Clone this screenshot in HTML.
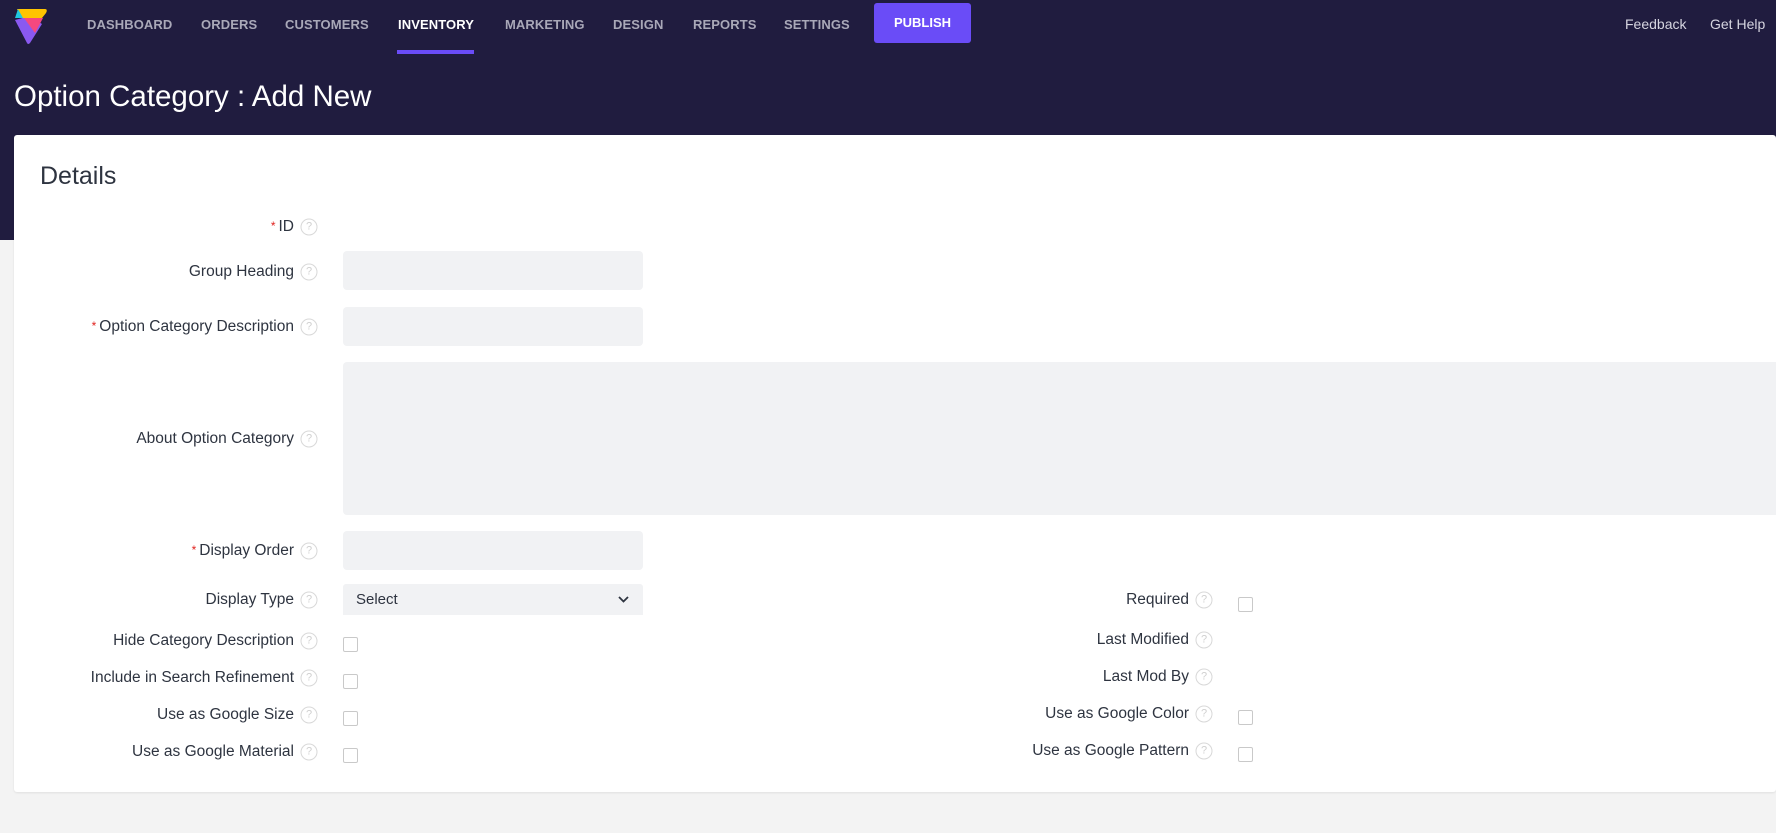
<!DOCTYPE html>
<html><head><meta charset="utf-8"><style>
*{box-sizing:border-box;margin:0;padding:0}
body{width:1776px;height:833px;background:#f3f3f3;font-family:"Liberation Sans",sans-serif;position:relative;overflow:hidden;color:#2e3440}
.hdr{position:absolute;left:0;top:0;width:1776px;height:240px;background:#201c3f}
.nav{position:absolute;top:17px;font-size:13px;font-weight:bold;color:#a9a8b8;letter-spacing:0.1px}
.nav.act{color:#fff}
.ul{position:absolute;left:397px;top:50px;width:77px;height:4px;background:#6a4cf7}
.pub{position:absolute;left:874px;top:3px;width:97px;height:40px;background:#6a4cf7;border-radius:3px;color:#fff;font-weight:bold;font-size:13px;text-align:center;line-height:40px}
.rl{position:absolute;top:16px;font-size:14px;color:#d6d5e0}
.title{position:absolute;left:14px;top:80px;font-size:29.5px;color:#fff}
.card{position:absolute;left:14px;top:135px;width:1762px;height:657px;background:#fff;border-radius:3px;box-shadow:0 1px 2px rgba(0,0,0,.08)}
.det{position:absolute;left:40px;top:162px;font-size:25px;color:#2e3440}
.lbl{position:absolute;font-size:15.5px;color:#2e3440;text-align:right;white-space:nowrap;transform:translateY(-50%)}
.lbl .s{color:#e0221e;font-size:12px;vertical-align:1px;margin-right:3px}
.q{position:absolute;width:17px;height:17px;border:1.3px solid #d8d8d8;border-radius:50%;color:#d0d0d0;font-size:11px;text-align:center;line-height:15px;transform:translate(-50%,-50%)}
.in{position:absolute;left:343px;width:300px;height:39px;background:#f1f2f4;border-radius:4px}
.cb{position:absolute;width:15px;height:15px;border:1.6px solid #c9c9c9;border-radius:2px}
</style></head><body>
<div class="hdr"></div>
<svg style="position:absolute;left:12px;top:6px" width="38" height="40" viewBox="0 0 38 40">
<path d="M3 14 L15 37 Q16 39 18 37 L30 18 L18 10 Z" fill="#8a59f0"/>
<path d="M5 3 L33 3 Q36 3 34 7 L30 12 L9 12 Z" fill="#ffc400"/>
<path d="M3 12 L6 3 L11 12 Z" fill="#1fc8e0"/>
<path d="M12 12 L31 12 L23 27 Z" fill="#f5487f"/>
</svg>
<div class="nav" style="left:87px">DASHBOARD</div>
<div class="nav" style="left:201px">ORDERS</div>
<div class="nav" style="left:285px">CUSTOMERS</div>
<div class="nav act" style="left:398px">INVENTORY</div>
<div class="nav" style="left:505px">MARKETING</div>
<div class="nav" style="left:613px">DESIGN</div>
<div class="nav" style="left:693px">REPORTS</div>
<div class="nav" style="left:784px">SETTINGS</div>
<div class="ul"></div>
<div class="pub">PUBLISH</div>
<div class="rl" style="left:1625px">Feedback</div>
<div class="rl" style="left:1710px">Get Help</div>
<div class="title">Option Category : Add New</div>
<div class="card"></div>
<div class="det">Details</div>

<div class="lbl" style="right:1482px;top:227px"><span class="s">*</span>ID</div><div class="q" style="left:309px;top:227px">?</div>
<div class="lbl" style="right:1482px;top:272px">Group Heading</div><div class="q" style="left:309px;top:272px">?</div>
<div class="in" style="top:251px"></div>
<div class="lbl" style="right:1482px;top:327px"><span class="s">*</span>Option Category Description</div><div class="q" style="left:309px;top:327px">?</div>
<div class="in" style="top:307px"></div>
<div class="lbl" style="right:1482px;top:439px">About Option Category</div><div class="q" style="left:309px;top:439px">?</div>
<div class="in" style="top:362px;width:1433px;height:153px;border-radius:4px 0 0 4px"></div>
<div class="lbl" style="right:1482px;top:551px"><span class="s">*</span>Display Order</div><div class="q" style="left:309px;top:551px">?</div>
<div class="in" style="top:531px"></div>
<div class="lbl" style="right:1482px;top:600px">Display Type</div><div class="q" style="left:309px;top:600px">?</div>
<div class="in" style="top:584px;height:31px;border-radius:3px 3px 0 0;font-size:15px;line-height:31px;padding-left:13px">Select<svg style="position:absolute;right:14px;top:12px" width="11" height="7" viewBox="0 0 11 7"><path d="M1 1 L5.5 5.5 L10 1" stroke="#2e3440" stroke-width="1.8" fill="none"/></svg></div>
<div class="lbl" style="right:1482px;top:641px">Hide Category Description</div><div class="q" style="left:309px;top:641px">?</div><div class="cb" style="left:343px;top:637px"></div>
<div class="lbl" style="right:1482px;top:678px">Include in Search Refinement</div><div class="q" style="left:309px;top:678px">?</div><div class="cb" style="left:343px;top:674px"></div>
<div class="lbl" style="right:1482px;top:715px">Use as Google Size</div><div class="q" style="left:309px;top:715px">?</div><div class="cb" style="left:343px;top:711px"></div>
<div class="lbl" style="right:1482px;top:752px">Use as Google Material</div><div class="q" style="left:309px;top:752px">?</div><div class="cb" style="left:343px;top:748px"></div>

<div class="lbl" style="right:587px;top:600px">Required</div><div class="q" style="left:1204px;top:600px">?</div><div class="cb" style="left:1238px;top:597px"></div>
<div class="lbl" style="right:587px;top:640px">Last Modified</div><div class="q" style="left:1204px;top:640px">?</div>
<div class="lbl" style="right:587px;top:677px">Last Mod By</div><div class="q" style="left:1204px;top:677px">?</div>
<div class="lbl" style="right:587px;top:714px">Use as Google Color</div><div class="q" style="left:1204px;top:714px">?</div><div class="cb" style="left:1238px;top:710px"></div>
<div class="lbl" style="right:587px;top:751px">Use as Google Pattern</div><div class="q" style="left:1204px;top:751px">?</div><div class="cb" style="left:1238px;top:747px"></div>
</body></html>
